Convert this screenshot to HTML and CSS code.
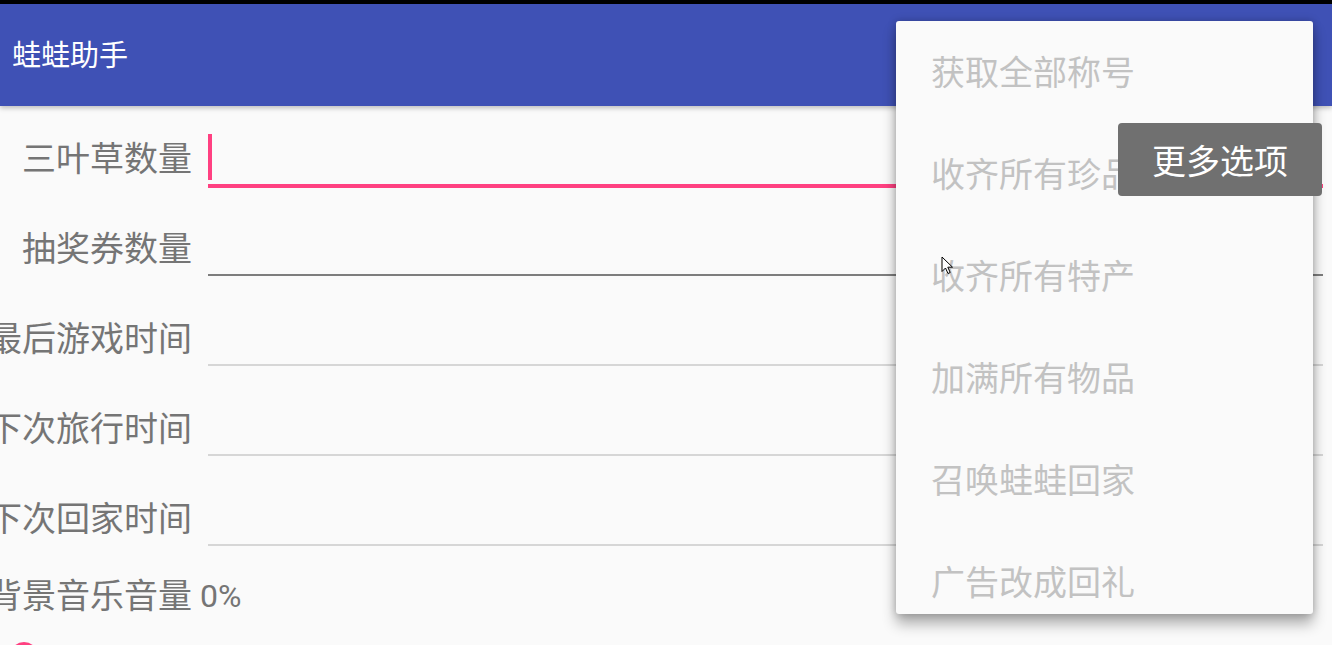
FILE: index.html
```html
<!DOCTYPE html>
<html lang="zh-CN">
<head>
    <meta charset="UTF-8">
    <meta name="viewport" content="width=device-width, initial-scale=1.0">
    <title>蛙蛙助手</title>
    <link rel="stylesheet" href="styles.css">
</head>
<body>
    <div class="status-bar"></div>
    <header class="app-bar">
        <h1 class="app-title">蛙蛙助手</h1>
    </header>

    <main class="form">
        <div class="row">
            <label class="label">三叶草数量</label>
            <div class="field focused"><span class="caret"></span></div>
        </div>
        <div class="row">
            <label class="label">抽奖券数量</label>
            <div class="field dark"></div>
        </div>
        <div class="row">
            <label class="label">最后游戏时间</label>
            <div class="field"></div>
        </div>
        <div class="row">
            <label class="label">下次旅行时间</label>
            <div class="field"></div>
        </div>
        <div class="row">
            <label class="label">下次回家时间</label>
            <div class="field"></div>
        </div>
        <div class="volume-row">
            <span class="label">背景音乐音量</span>
            <span class="value">0%</span>
        </div>
        <div class="seek-bar"><span class="thumb"></span></div>
    </main>

    <div class="menu">
        <div class="menu-item">获取全部称号</div>
        <div class="menu-item">收齐所有珍品</div>
        <div class="menu-item">收齐所有特产</div>
        <div class="menu-item">加满所有物品</div>
        <div class="menu-item">召唤蛙蛙回家</div>
        <div class="menu-item">广告改成回礼</div>
    </div>

    <div class="tooltip">更多选项</div>

    <svg class="pointer" width="14" height="20" viewBox="0 0 14 20">
        <path d="M1 1 L1 15.5 L4.5 12 L7 17.5 L9.2 16.5 L6.8 11.2 L11.5 11.2 Z" fill="#fff" stroke="#000" stroke-width="1"/>
    </svg>
</body>
</html>
```

FILE: styles.css
```css
* {
    margin: 0;
    padding: 0;
    box-sizing: border-box;
}

html, body {
    width: 1332px;
    height: 645px;
    overflow: hidden;
}

body {
    font-family: Roboto, "Noto Sans CJK SC", sans-serif;
    background-color: #fafafa;
    position: relative;
}

.status-bar {
    height: 4px;
    background-color: #000;
}

.app-bar {
    height: 102px;
    background-color: #3f51b5;
    padding-left: 12px;
    display: flex;
    align-items: center;
    box-shadow: 0 2px 5px rgba(0, 0, 0, 0.25);
    position: relative;
}

.app-title {
    color: #fff;
    font-size: 29px;
    font-weight: 400;
    line-height: 1;
    padding-top: 2px;
}

.form {
    padding: 7px 9px 0 0;
}

.row {
    display: grid;
    grid-template-columns: 192px 1fr;
    column-gap: 16px;
    height: 90px;
}

.label {
    display: flex;
    justify-content: flex-end;
    white-space: nowrap;
    font-size: 34px;
    line-height: 92px;
    height: 90px;
    color: #757575;
}

.field {
    height: 73px;
    border-bottom: 2px solid #d6d6d6;
}

.field.dark {
    border-bottom-color: #7d7d7d;
}

.field.focused {
    height: 75px;
    border-bottom: 4px solid #ff4081;
    padding-top: 21px;
}

.caret {
    display: block;
    width: 4px;
    height: 46px;
    background-color: #ff4081;
}

.volume-row {
    display: flex;
    height: 66px;
    align-items: center;
}

.volume-row .label {
    width: 192px;
    height: 66px;
    line-height: 66px;
}

.value {
    margin-left: 8px;
    font-size: 32px;
    color: #757575;
}

.seek-bar {
    padding: 13px 0 0 10px;
}

.thumb {
    display: block;
    width: 28px;
    height: 28px;
    border-radius: 50%;
    background-color: #ff4081;
}

.menu {
    position: absolute;
    top: 21px;
    left: 896px;
    width: 417px;
    height: 593px;
    overflow: hidden;
    background-color: #fafafa;
    border-radius: 3px;
    box-shadow: 0 10px 14px rgba(0, 0, 0, 0.3), 0 0 8px rgba(0, 0, 0, 0.22);
}

.menu-item {
    height: 102px;
    line-height: 104px;
    padding-left: 35px;
    font-size: 34px;
    color: #c2c2c2;
    white-space: nowrap;
}

.tooltip {
    position: absolute;
    top: 123px;
    left: 1118px;
    width: 204px;
    height: 73px;
    border-radius: 4px;
    background-color: #707070;
    color: #fff;
    font-size: 34px;
    display: flex;
    align-items: center;
    justify-content: center;
}

.pointer {
    position: absolute;
    top: 256px;
    left: 941px;
}
```
